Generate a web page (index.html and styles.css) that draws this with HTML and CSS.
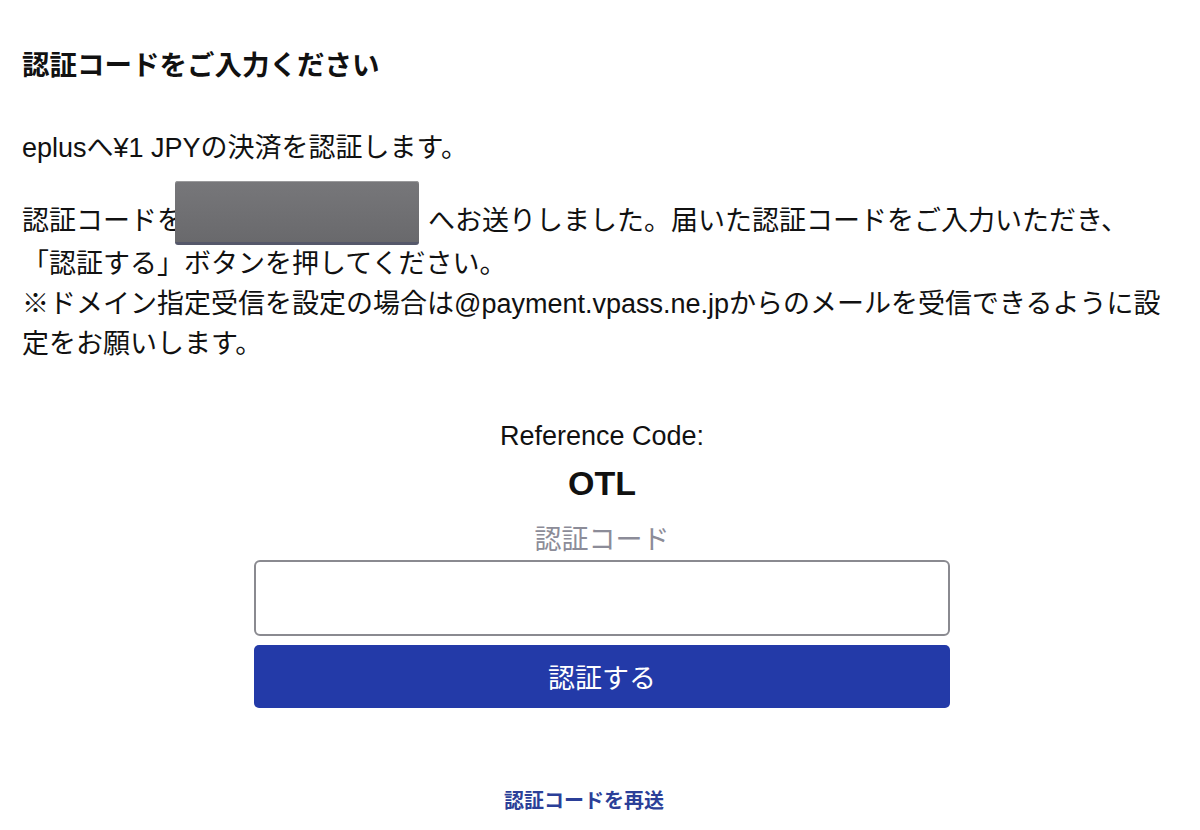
FILE: index.html
```html
<!DOCTYPE html>
<html lang="ja">

<head>
    <meta charset="UTF-8">
    <meta name="viewport" content="width=device-width, initial-scale=1.0">
    <title>認証コードのご入力</title>
    <link rel="stylesheet" href="styles.css">
</head>

<body>
    <div class="page">
        <h1 class="title">認証コードをご入力ください</h1>
        <p class="intro">eplusへ¥1 JPYの決済を認証します。</p>
        <p class="intro notice">認証コードを<span class="masked"></span>へお送りしました。届いた認証コードをご入力いただき、「認証する」ボタンを押してください。<br>※ドメイン指定受信を設定の場合は@payment.vpass.ne.jpからのメールを受信できるように設定をお願いします。</p>

        <form class="verify" autocomplete="off">
            <div class="ref_label">Reference Code:</div>
            <div class="ref_code">OTL</div>
            <label class="code_label" for="otp">認証コード</label>
            <input type="text" id="otp" name="otp" class="code_input">
            <button type="submit" class="submit_btn">認証する</button>
            <a href="#" class="resend">認証コードを再送</a>
        </form>
    </div>
</body>

</html>
```

FILE: styles.css
```css
* {
    box-sizing: border-box;
}

body {
    margin: 0;
    background: #fff;
    color: #111;
    font-family: "Liberation Sans", "Noto Sans CJK JP", sans-serif;
}

.page {
    padding: 46px 24px 0 22px;
    text-spacing-trim: space-all;
}

.title {
    margin: 0 0 42px;
    font-size: 27.5px;
    line-height: 40px;
    font-weight: bold;
}

.intro {
    margin: 0 0 33px;
    font-size: 27px;
    line-height: 40px;
}

.notice {
    margin-bottom: 52px;
}

/* redacted e-mail address */
.masked {
    display: inline-block;
    width: 244px;
    height: 64px;
    margin: -23px 9px -1px -9px;
    vertical-align: -14px;
    border-radius: 3px;
    border-bottom: 3px solid #55586a;
    background: linear-gradient(#77777a, #69696c);
    box-shadow: inset 0 1px 0 #9a9a9c;
}

.verify {
    display: flex;
    flex-direction: column;
    align-items: center;
    width: 696px;
    margin-left: calc(50% - 345px);
}

.ref_label {
    font-size: 27px;
    line-height: 40px;
}

.ref_code {
    font-size: 34px;
    line-height: 54px;
    font-weight: bold;
}

.code_label {
    margin-top: 10px;
    font-size: 27px;
    line-height: 40px;
    color: #8c8c98;
}

.code_input {
    width: 100%;
    height: 76px;
    border: 2px solid #8a8a90;
    border-radius: 6px;
    font-size: 27px;
    padding: 0 14px;
    outline: 0;
}

.submit_btn {
    width: 100%;
    height: 63px;
    margin-top: 9px;
    border: 0;
    border-radius: 5px;
    background: #233aa8;
    color: #fff;
    font-family: inherit;
    font-size: 27px;
}

.resend {
    margin: 78px 36px 0 0;
    font-size: 20px;
    line-height: 30px;
    font-weight: bold;
    color: #2b3f98;
    text-decoration: none;
}
```
